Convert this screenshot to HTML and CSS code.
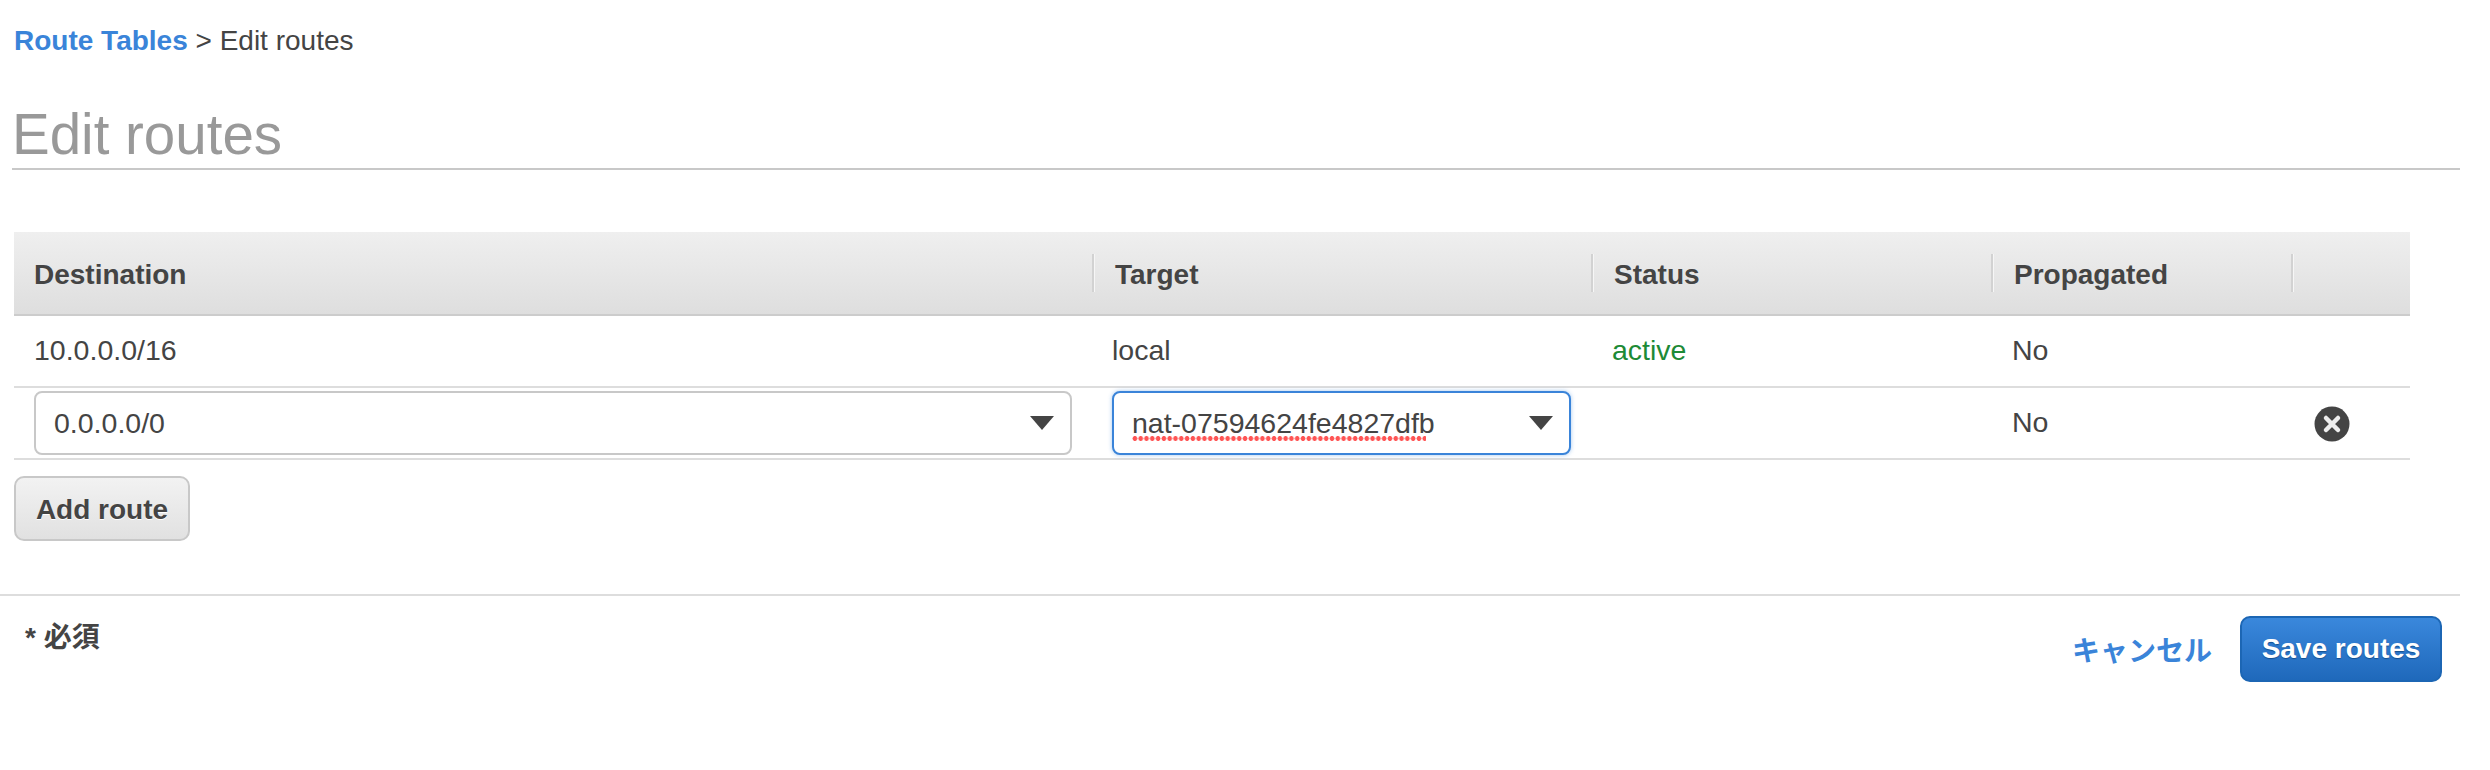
FILE: index.html
```html
<!DOCTYPE html>
<html lang="en">
<head>
<meta charset="utf-8">
<title>Edit routes</title>
<link rel="stylesheet" href="styles.css">
</head>
<body>
<nav class="breadcrumb"><a class="crumb-link">Route Tables</a> &gt; Edit routes</nav>
<h1 class="title">Edit routes</h1>
<section class="routes">
  <div class="row head">
    <div class="hcell first"><span>Destination</span></div>
    <div class="hcell"><span>Target</span></div>
    <div class="hcell"><span>Status</span></div>
    <div class="hcell"><span>Propagated</span></div>
    <div class="hcell"><span></span></div>
  </div>
  <div class="row static">
    <div class="cell pad-dest">10.0.0.0/16</div>
    <div class="cell pad-target">local</div>
    <div class="cell pad-status active">active</div>
    <div class="cell pad-prop">No</div>
    <div class="cell"></div>
  </div>
  <div class="row edit">
    <div class="cell pad-dest">
      <div class="select dest"><span>0.0.0.0/0</span><i class="caret"></i></div>
    </div>
    <div class="cell pad-target">
      <div class="select target focus"><span class="misspelt">nat-07594624fe4827dfb</span><i class="caret"></i></div>
    </div>
    <div class="cell"></div>
    <div class="cell pad-prop">No</div>
    <div class="cell pad-remove">
      <svg class="remove" width="36" height="36" viewBox="0 0 36 36" aria-label="Remove"><circle cx="18" cy="18" r="17.5" fill="#444"/><path d="M12 12l12 12M24 12l-12 12" stroke="#eee" stroke-width="4.500" stroke-linecap="round"/></svg>
    </div>
  </div>
</section>
<button class="btn add">Add route</button>
<footer class="foot">
  <div class="required">* 必須</div>
  <div class="actions">
    <a class="cancel">キャンセル</a>
    <button class="btn save">Save routes</button>
  </div>
</footer>
</body>
</html>
```
FILE: styles.css
```css
* { box-sizing: border-box; }
html, body { margin: 0; padding: 0; background: #fff; }
body {
  width: 2490px;
  height: 770px;
  overflow: hidden;
  font-family: "Liberation Sans", "Noto Sans CJK JP", sans-serif;
  font-size: 28px;
  color: #444;
}
.breadcrumb {
  padding: 26px 0 0 14px;
  height: 88px;
  line-height: 30px;
}
.crumb-link { color: #3a84d9; font-weight: 700; }
.title {
  margin: 0 30px 0 12px;
  padding: 11px 0 0 0;
  height: 82px;
  border-bottom: 2px solid #c8c8c8;
  font-size: 56.5px;
  line-height: 72px;
  font-weight: 400;
  color: #999;
}
.routes { margin: 62px 0 0 14px; width: 2396px; }
.row {
  display: grid;
  grid-template-columns: 1078px 499px 400px 300px 119px;
  align-items: center;
}
.head {
  height: 84px;
  background: linear-gradient(#efefef, #dedede);
  border-bottom: 2px solid #ccc;
  font-weight: 700;
}
.hcell { height: 38px; }
.hcell span {
  display: block;
  height: 38px;
  line-height: 41px;
  padding-left: 21px;
  border-left: 2px solid #d2d2d2;
  box-shadow: inset 1px 0 0 #f6f6f6;
}
.hcell.first span { border-left: 0; box-shadow: none; padding-left: 20px; }
.static, .edit { height: 72px; border-bottom: 2px solid #ddd; font-size: 28.5px; }
.cell { margin-top: -2px; }
.pad-dest { padding-left: 20px; }
.pad-target { padding-left: 20px; }
.pad-status { padding-left: 21px; }
.pad-prop { padding-left: 21px; }
.pad-remove { padding-left: 23px; display: flex; align-items: center; padding-top: 4px; }
.active { color: #1d8a36; }
.select {
  display: flex;
  align-items: center;
  justify-content: space-between;
  height: 64px;
  margin-top: 2px;
  padding: 0 16px 0 18px;
  background: #fff;
  border: 2px solid #c8c8c8;
  border-radius: 8px;
}
.select.dest { width: 1038px; }
.select.target {
  width: 459px;
  border-color: #3a84d9;
  box-shadow: 0 0 4px rgba(58, 132, 217, .45);
}
.misspelt { position: relative; }
.misspelt::after {
  content: "";
  position: absolute;
  left: 0;
  bottom: -1px;
  width: 294px;
  height: 5px;
  background: radial-gradient(circle at center, #f55 2.1px, transparent 2.7px) left center / 5.8px 5px repeat-x;
}
.caret {
  width: 0;
  height: 0;
  border-left: 12px solid transparent;
  border-right: 12px solid transparent;
  border-top: 14px solid #444;
}
.remove { display: block; }
.btn {
  display: block;
  font-family: inherit;
  font-size: 28px;
  font-weight: 700;
  cursor: pointer;
}
.add {
  margin: 16px 0 0 14px;
  width: 176px;
  height: 65px;
  padding: 3px 0 0;
  color: #444;
  background: linear-gradient(#f2f2f2, #e1e1e1);
  border: 2px solid #c8c8c8;
  border-radius: 10px;
  text-shadow: 0 1px 0 #fff;
}
.foot {
  display: flex;
  justify-content: space-between;
  margin-top: 53px;
  width: 2460px;
  height: 90px;
  border-top: 2px solid #ddd;
  padding: 20px 18px 0 25px;
}
.required { font-weight: 700; line-height: 30px; margin-top: 7px; }
.actions { display: flex; align-items: center; gap: 28px; height: 66px; }
.cancel { color: #3a84d9; font-weight: 700; font-size: 28px; }
.save {
  width: 202px;
  height: 66px;
  padding: 0;
  color: #fff;
  background: linear-gradient(#3a88dc, #1f69bb);
  border: 2px solid #1c66b4;
  border-radius: 10px;
  text-shadow: 0 1px 1px #144f90;
}
```
